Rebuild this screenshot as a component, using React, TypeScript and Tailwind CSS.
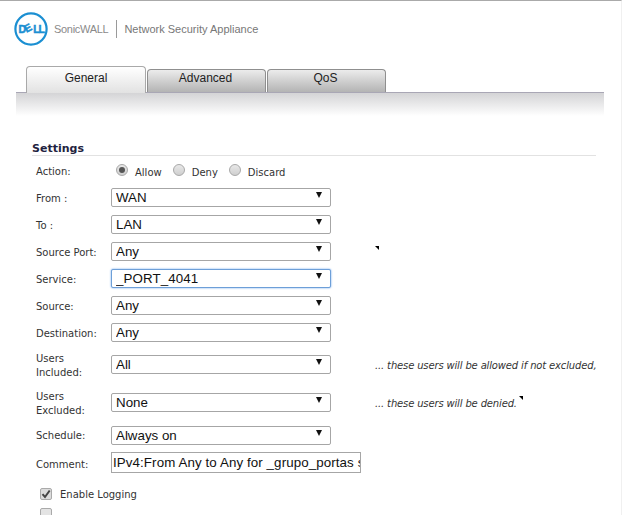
const labelFont = "[font-family:'DejaVu_Sans',Tahoma,sans-serif]";

const Marker = () => (
  <span className="absolute h-0 w-0 border-t-[4px] border-l-[4px] border-t-black border-l-transparent" />
);

const Logo = () => (
  <svg width="36" height="36" viewBox="0 0 36 36" className="shrink-0">
    <circle cx="18" cy="18" r="15.6" fill="none" stroke="#1b8fd2" strokeWidth="2.2" />
    <text
      x="5.6 13.4 20.2 25.4"
      y="21.8"
      rotate="0 -28 0 0"
      fontFamily="'Liberation Sans', Arial, sans-serif"
      fontWeight="700"
      fontSize="10.5"
      fill="#1b8fd2"
      stroke="#1b8fd2"
      strokeWidth="0.5"
    >
      DELL
    </text>
  </svg>
);

const Tab = ({ label, active }: { label: string; active?: boolean }) =>
  active ? (
    <div className="z-10 -mb-px flex h-[27px] w-[120px] justify-center rounded-t-[4px] border border-b-0 border-[#a9a9a9] bg-gradient-to-b from-white to-[#e2e2e2] pt-[2px] text-[12px] text-[#222]">
      {label}
    </div>
  ) : (
    <div className="flex h-[23px] w-[119px] justify-center rounded-t-[4px] border border-b-0 border-[#8f8f8f] bg-gradient-to-b from-[#ececec] to-[#b4b4b4] pr-[2px] text-[12px] leading-[16px] text-[#222]">
      {label}
    </div>
  );

const Select = ({ value, focused }: { value: string; focused?: boolean }) => (
  <div className="relative h-[19px] w-[220px]">
    <select
      defaultValue={value}
      className={
        focused
          ? "h-full w-full appearance-none rounded-[2px] border border-[#6d9fd8] bg-white pl-1 text-[13.33px] leading-[17px] tracking-[0.1px] text-[#111] shadow-[0_0_2px_#5b9bea] outline-none"
          : "h-full w-full appearance-none rounded-[2px] border border-[#a6a6a6] bg-white pl-1 text-[13.33px] leading-[17px] text-[#111] outline-none"
      }
    >
      <option>{value}</option>
    </select>
    <span className="absolute top-[7px] right-[9px] h-0 w-0 border-x-[3.5px] border-t-[6px] border-x-transparent border-t-[#111]" />
  </div>
);

const Row = ({
  label,
  value,
  focused,
  top = 0,
  height = 27,
  note,
}: {
  label: string;
  value: string;
  focused?: boolean;
  top?: number;
  height?: number;
  note?: React.ReactNode;
}) => (
  <div className="flex" style={{ height }}>
    <div className={`w-[75px] whitespace-pre-line text-[10px] leading-[14px] text-[#333] ${labelFont}`} style={{ paddingTop: top }}>
      {label}
    </div>
    <Select value={value} focused={focused} />
    {note}
  </div>
);

const Radio = ({ label, checked }: { label: string; checked?: boolean }) => (
  <div className="flex items-center">
    <span className="flex h-[12px] w-[12px] items-center justify-center rounded-full border border-[#a8a8a8] bg-gradient-to-b from-[#e8e8e8] to-[#cfcfcf]">
      {checked && <span className="h-[6px] w-[6px] rounded-full bg-[#555]" />}
    </span>
    <span className={`ml-[7px] mt-[5px] text-[10px] text-[#333] ${labelFont}`}>{label}</span>
  </div>
);

const Note = ({ text, marker }: { text: string; marker?: boolean }) => (
  <div className={`relative ml-[44px] whitespace-nowrap pt-[6px] text-[10px] tracking-[-0.15px] italic text-[#333] ${labelFont}`}>
    {text}
    {marker && (
      <span className="ml-[2px]">
        <Marker />
      </span>
    )}
  </div>
);

export default function App() {
  return (
    <div className="h-[515px] w-[622px] overflow-hidden border-t border-r border-t-[#aaaaaa] border-r-[#f0f0f0] bg-white [font-family:'Liberation_Sans',Arial,sans-serif]">
      <header className="flex h-[65px] items-center pb-[9px] pl-[13px]">
        <Logo />
        <span className="ml-[5px] text-[11px] tracking-[-0.3px] text-[#8a8a8a]">SonicWALL</span>
        <span className="ml-2 h-[18px] w-px bg-[#9a9a9a]" />
        <span className="ml-[7px] text-[11px] text-[#777]">Network Security Appliance</span>
      </header>

      <div className="flex items-end gap-px pl-[26px]">
        <Tab label="General" active />
        <Tab label="Advanced" />
        <Tab label="QoS" />
      </div>
      <div className="ml-4 h-[24px] w-[588px] border-t border-[#a9a7b5] bg-gradient-to-b from-[#d4d4d6] to-white" />

      <main className="pt-[26px] pl-[32px]">
        <h2 className={`h-[14px] w-[564px] border-b border-[#e2e2e2] text-[11px] leading-[13px] font-bold text-[#1f2340] ${labelFont}`}>
          Settings
        </h2>

        <div className="pl-[4px]">
          <div className="flex h-[29px]">
            <div className={`w-[80px] pt-[8px] text-[10px] leading-[15px] text-[#333] ${labelFont}`}>Action:</div>
            <div className="mt-[7px] flex h-[14px] gap-[11px]">
              <Radio label="Allow" checked />
              <Radio label="Deny" />
              <Radio label="Discard" />
            </div>
          </div>

          <Row label="From :" value="WAN" top={7} />
          <Row label="To :" value="LAN" top={7} />
          <Row
            label="Source Port:"
            value="Any"
            top={7}
            note={
              <div className="relative">
                <span className="absolute top-[7px] left-[44px]">
                  <Marker />
                </span>
              </div>
            }
          />
          <Row label="Service:" value="_PORT_4041" focused top={7} />
          <Row label="Source:" value="Any" top={7} />
          <Row label="Destination:" value="Any" height={32} top={7} />
          <Row
            label={"Users\nIncluded:"}
            value="All"
            height={38}
            note={<Note text="... these users will be allowed if not excluded," />}
          />
          <Row
            label={"Users\nExcluded:"}
            value="None"
            height={33}
            note={<Note text="... these users will be denied." marker />}
          />
          <Row label="Schedule:" value="Always on" height={29} top={6} />

          <div className="flex h-[32px]">
            <div className={`w-[75px] pt-[5px] text-[10px] leading-[15px] text-[#333] ${labelFont}`}>Comment:</div>
            <input
              readOnly
              defaultValue="IPv4:From Any to Any for _grupo_portas sem restricao"
              className="h-[21px] w-[250px] border border-[#a6a6a6] bg-white pl-[1px] text-[13.33px] tracking-[0.1px] text-[#111] outline-none"
            />
          </div>

          <div className="flex h-[20px] items-center pl-[4px]">
            <span className="flex h-[12px] w-[12px] items-center justify-center rounded-[2px] border border-[#aaa] bg-[#dcdcdc] text-[#444]">
              <svg width="10" height="10" viewBox="0 0 10 10">
                <path d="M1.5 5.2 L4 8 L8.7 1.5" fill="none" stroke="#444" strokeWidth="2" />
              </svg>
            </span>
            <span className={`ml-[8px] text-[10px] text-[#333] ${labelFont}`}>Enable Logging</span>
          </div>
          <div className="mt-[4px] ml-[4px] h-[12px] w-[12px] rounded-[2px] border border-[#aaa] bg-[#e4e4e4]" />
        </div>
      </main>
    </div>
  );
}
